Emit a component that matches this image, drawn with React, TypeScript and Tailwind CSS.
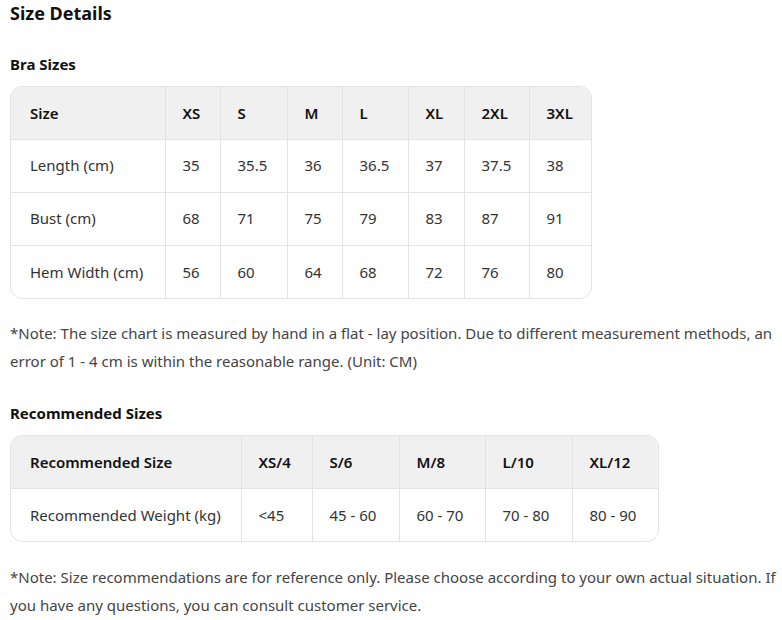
import React from 'react';

const braHead = ['Size', 'XS', 'S', 'M', 'L', 'XL', '2XL', '3XL'];
const braRows = [
  ['Length (cm)', '35', '35.5', '36', '36.5', '37', '37.5', '38'],
  ['Bust (cm)', '68', '71', '75', '79', '83', '87', '91'],
  ['Hem Width (cm)', '56', '60', '64', '68', '72', '76', '80'],
];
const braWidths = ['w-[154px]', 'w-[55px]', 'w-[67px]', 'w-[55px]', 'w-[66px]', 'w-[56px]', 'w-[65px]', 'w-[62px]'];

const recHead = ['Recommended Size', 'XS/4', 'S/6', 'M/8', 'L/10', 'XL/12'];
const recRows = [['Recommended Weight (kg)', '<45', '45 - 60', '60 - 70', '70 - 80', '80 - 90']];
const recWidths = ['w-[230px]', 'w-[71px]', 'w-[87px]', 'w-[86px]', 'w-[87px]', 'w-[86px]'];

interface SizeTableProps {
  head: string[];
  rows: string[][];
  widths: string[];
}

const SizeTable: React.FC<SizeTableProps> = ({ head, rows, widths }) => {
  return (
    <div className="inline-block border border-[#e3e3e3] rounded-xl overflow-hidden">
      <table className="border-collapse table-fixed">
        <thead>
          <tr className="bg-[#f0f0f0]">
            {head.map((h, i) => (
              <th
                key={i}
                className={`${widths[i]} h-[52px] text-left font-semibold text-[15px] text-[#111] pr-2 ${i === 0 ? 'pl-[19px]' : 'pl-[17px]'} ${i > 0 ? 'border-l border-[#e3e3e3]' : ''}`}
              >
                {h}
              </th>
            ))}
          </tr>
        </thead>
        <tbody>
          {rows.map((row, r) => (
            <tr key={r} className="border-t border-[#e3e3e3]">
              {row.map((c, i) => (
                <td
                  key={i}
                  className={`h-[53px] text-[15px] text-[#333] pr-2 ${i === 0 ? 'pl-[19px]' : 'pl-[17px]'} ${i > 0 ? 'border-l border-[#e3e3e3]' : ''}`}
                >
                  {c}
                </td>
              ))}
            </tr>
          ))}
        </tbody>
      </table>
    </div>
  );
};

export default function App() {
  return (
    <div className="bg-white pl-[10px] pr-0 font-['Segoe_UI','Noto_Sans',sans-serif] text-[#222]">
      <h2 className="text-[18px] font-bold leading-[26px] text-[#111]">Size Details</h2>

      <h3 className="mt-[28px] text-[15px] font-bold leading-[20px] text-[#111]">Bra Sizes</h3>
      <div className="mt-[12px]">
        <SizeTable head={braHead} rows={braRows} widths={braWidths} />
      </div>
      <p className="mt-[14px] text-[15px] leading-[28px] text-[#444]">
        *Note: The size chart is measured by hand in a flat - lay position. Due to different measurement methods, an error of 1 - 4 cm is within the reasonable range. (Unit: CM)
      </p>

      <h3 className="mt-[28px] text-[15px] font-bold leading-[20px] text-[#111]">Recommended Sizes</h3>
      <div className="mt-[12px]">
        <SizeTable head={recHead} rows={recRows} widths={recWidths} />
      </div>
      <p className="mt-[15px] text-[15px] leading-[28px] text-[#444]">
        *Note: Size recommendations are for reference only. Please choose according to your own actual situation. If you have any questions, you can consult customer service.
      </p>
    </div>
  );
}
